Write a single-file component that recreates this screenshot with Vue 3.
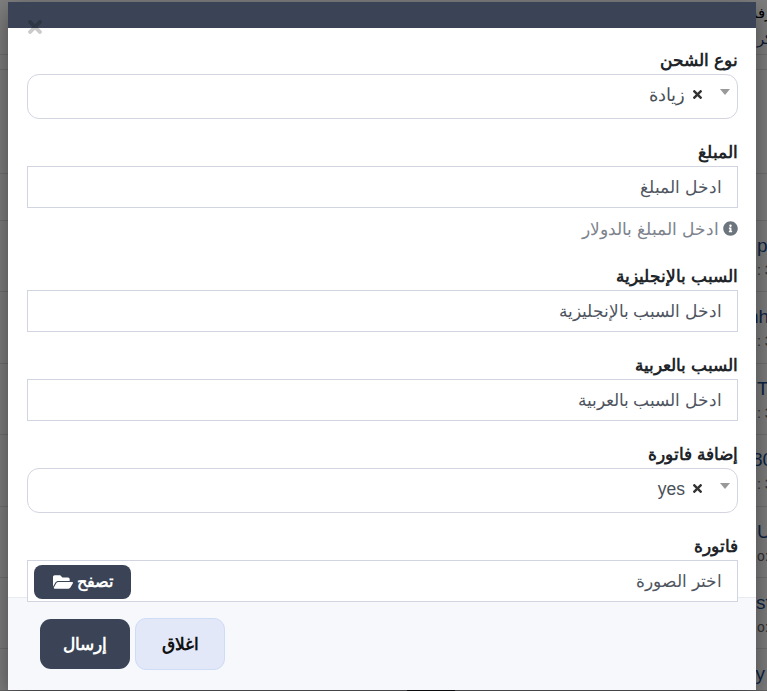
<script setup>
const timesPath = 'M242.72 256l100.07-100.07c12.28-12.28 12.28-32.19 0-44.48l-22.24-22.24c-12.28-12.28-32.19-12.28-44.48 0L176 189.28 75.93 89.21c-12.28-12.28-32.19-12.28-44.48 0L9.21 111.45c-12.28 12.28-12.28 32.19 0 44.48L109.28 256 9.21 356.07c-12.28 12.28-12.28 32.19 0 44.48l22.24 22.24c12.28 12.28 32.2 12.28 44.48 0L176 322.72l100.07 100.07c12.28 12.28 32.2 12.28 44.48 0l22.24-22.24c12.28-12.28 12.28-32.19 0-44.48L242.72 256z'
const fields = [
  { key: 'type', label: 'نوع الشحن', kind: 'select', value: 'زيادة' },
  { key: 'amount', label: 'المبلغ', kind: 'input', value: 'ادخل المبلغ', help: 'ادخل المبلغ بالدولار' },
  { key: 'en', label: 'السبب بالإنجليزية', kind: 'input', value: 'ادخل السبب بالإنجليزية' },
  { key: 'ar', label: 'السبب بالعربية', kind: 'input', value: 'ادخل السبب بالعربية' },
  { key: 'inv', label: 'إضافة فاتورة', kind: 'select', value: 'yes' },
]
const rows = [
  { title: 'p', sub: ': 3', x: 757 },
  { title: 'nh', sub: ': 3', x: 748 },
  { title: 'T', sub: ': 3', x: 757 },
  { title: '80', sub: ': 3', x: 752 },
  { title: 'U', sub: 'o:', x: 757 },
  { title: 'st', sub: 'o:', x: 756 },
  { title: 'ey', sub: '', x: 745 },
]
</script>

<template>
  <div class="page">
    <div class="backdrop-rows">
      <div class="row-top">
        <div class="bg-text">رفة</div>
        <div class="bg-text link">كر</div>
      </div>
      <div class="row-a"></div>
      <div class="row-b"></div>
      <div v-for="r in rows" :key="r.title" class="row">
        <div class="bg-title" :style="{ paddingLeft: r.x + 'px' }">{{ r.title }}</div>
        <div class="bg-sub">{{ r.sub }}</div>
      </div>
    </div>
    <div class="scrim"></div>
    <div class="page-end"><span class="page-end-dark"></span></div>

    <section class="modal" dir="rtl">
      <header class="modal-head"></header>
      <svg class="close" viewBox="0 80 352 352"><path fill="currentColor" :d="timesPath"/></svg>
      <div class="modal-body">
        <div v-for="f in fields" :key="f.key" class="group">
          <label class="label">{{ f.label }}</label>
          <div v-if="f.kind === 'select'" class="select">
            <svg class="remove" viewBox="0 80 352 352"><path fill="currentColor" :d="timesPath"/></svg>
            <span class="sel-value">{{ f.value }}</span>
            <span class="caret"></span>
          </div>
          <div v-else class="input">{{ f.value }}</div>
          <div v-if="f.help" class="help">
            <svg class="info" viewBox="0 0 512 512"><path fill="currentColor" d="M256 8C119.043 8 8 119.083 8 256c0 136.997 111.043 248 248 248s248-111.003 248-248C504 119.083 392.957 8 256 8zm0 110c23.196 0 42 18.804 42 42s-18.804 42-42 42-42-18.804-42-42 18.804-42 42-42zm56 254c0 6.627-5.373 12-12 12h-88c-6.627 0-12-5.373-12-12v-24c0-6.627 5.373-12 12-12h12v-64h-12c-6.627 0-12-5.373-12-12v-24c0-6.627 5.373-12 12-12h64c6.627 0 12 5.373 12 12v100h12c6.627 0 12 5.373 12 12v24z"/></svg>
            <span>{{ f.help }}</span>
          </div>
        </div>
        <div class="group last">
          <label class="label">فاتورة</label>
          <div class="input file">
            <span>اختر الصورة</span>
            <button class="browse" type="button">
              <span>تصفح</span>
              <svg class="folder" viewBox="0 0 576 512"><path fill="currentColor" d="M572.694 292.093L500.27 416.248A63.997 63.997 0 0 1 444.989 448H45.025c-18.523 0-30.064-20.093-20.731-36.093l72.424-124.155A64 64 0 0 1 152 256h399.964c18.523 0 30.064 20.093 20.73 36.093zM152 224h328v-48c0-26.51-21.49-48-48-48H272l-64-64H48C21.49 64 0 85.49 0 112v278.046l69.077-118.418C86.214 242.25 117.989 224 152 224z"/></svg>
            </button>
          </div>
        </div>
      </div>
      <footer class="modal-foot">
        <button class="btn light" type="button">اغلاق</button>
        <button class="btn dark" type="button">إرسال</button>
      </footer>
    </section>
  </div>
</template>

<style>
html, body { margin: 0; overflow: hidden; background: #fff; }
</style>

<style scoped>
.page {
  position: relative;
  width: 767px;
  height: 691px;
  overflow: hidden;
  font-family: "Liberation Sans", sans-serif;
  background: #fff;
}
.backdrop-rows { display: flex; flex-direction: column; align-items: flex-end; }
.row-top { width: 100%; height: 55px; box-sizing: border-box; border-bottom: 1px solid #dee2e6; text-align: right; }
.row-a { width: 100%; height: 104px; border-top: 1px solid #dee2e6; box-sizing: border-box; margin-top: 14px; }
.row-b { width: 100%; height: 47px; border-top: 1px solid #dee2e6; box-sizing: border-box; }
.row { width: 100%; height: 71.4px; flex: none; border-top: 1px solid #dee2e6; box-sizing: border-box; padding-top: 13px; white-space: nowrap; overflow: hidden; }
.bg-text { font-size: 15px; line-height: 26px; color: #000; margin-right: -5px; }
.bg-text.link { color: #1b3a6b; }
.bg-title { font-size: 19px; line-height: 24px; color: #1b4b8a; }
.bg-sub { font-size: 14px; line-height: 25px; color: #666; padding-left: 757px; }
.scrim { position: absolute; inset: 0; background: rgba(0, 0, 0, 0.5); }
.page-end { position: absolute; left: 0; right: 0; bottom: 0; height: 1px; background: #666; }
.page-end-dark { position: absolute; left: 407px; width: 48px; height: 1px; background: #111; }

.modal {
  position: absolute;
  left: 8px;
  top: 2px;
  width: 748px;
  height: 688px;
  display: flex;
  flex-direction: column;
  background: #fff;
  box-shadow: 0 8px 24px rgba(0, 0, 0, 0.45);
}
.modal-head { height: 26px; flex: none; background: #3a4456; }
.close {
  position: absolute;
  left: 20px;
  top: 18px;
  width: 14px;
  height: 14px;
  color: #000;
  opacity: 0.2;
}
.modal-body {
  position: relative;
  z-index: 1;
  height: 569px;
  flex: none;
  padding: 20px 18px 0 19px;
  box-sizing: border-box;
}
.group { margin-bottom: 21px; }
.group.last { margin-bottom: 0; }
.label {
  display: block;
  height: 26px;
  line-height: 25px;
  font-size: 16.6px;
  font-weight: 700;
  color: #212529;
}
.select {
  height: 45px;
  box-sizing: border-box;
  border: 1px solid #d3d5e0;
  border-radius: 12px;
  background: #fff;
  display: flex;
  align-items: center;
  padding: 0 35px 4px 0;
  font-size: 17.5px;
  color: #495057;
  position: relative;
}
.remove { width: 9px; height: 9px; color: #333; margin-left: 8px; flex: none; }
.sel-value { line-height: 20px; }
.caret {
  position: absolute;
  right: 7px;
  top: 14px;
  width: 0;
  height: 0;
  border-left: 5px solid transparent;
  border-right: 5px solid transparent;
  border-top: 6px solid #999;
}
.input {
  height: 42px;
  box-sizing: border-box;
  border: 1px solid #d1d5e0;
  background: #fff;
  display: flex;
  align-items: center;
  justify-content: space-between;
  padding: 0 15px;
  font-size: 17px;
  color: #4f5560;
}
.input.file { padding: 0 15px 0 6px; }
.help {
  display: flex;
  align-items: center;
  gap: 4px;
  height: 35px;
  box-sizing: border-box;
  padding: 8px 0 2px;
  font-size: 17.2px;
  line-height: 24px;
  color: #7d838c;
}
.info { width: 15px; height: 15px; color: #6c757d; flex: none; }
.browse {
  height: 34px;
  width: 97px;
  border: 0;
  border-radius: 8px;
  background: #3a4456;
  color: #fff;
  font: 700 15.5px "Liberation Sans", sans-serif;
  display: flex;
  align-items: center;
  justify-content: center;
  gap: 4px;
  padding: 0;
  margin-top: 2px;
}
.folder { width: 20px; height: 18px; }
.modal-foot {
  flex: 1;
  background: #f6f8fb;
  border-top: 1px solid #e7eaf0;
  box-sizing: border-box;
  display: flex;
  justify-content: flex-end;
  align-items: flex-start;
  padding: 20px 0 0 32px;
  gap: 5px;
}
.btn {
  width: 90px;
  border-radius: 11px;
  font: 700 16.5px "Liberation Sans", sans-serif;
  padding: 0;
  box-sizing: border-box;
}
.btn.light { height: 52px; background: #e2e8f8; border: 1px solid #cfdcf6; color: #111; }
.btn.dark { height: 50px; margin-top: 1px; background: #3a4456; border: 0; color: #fff; }
</style>
